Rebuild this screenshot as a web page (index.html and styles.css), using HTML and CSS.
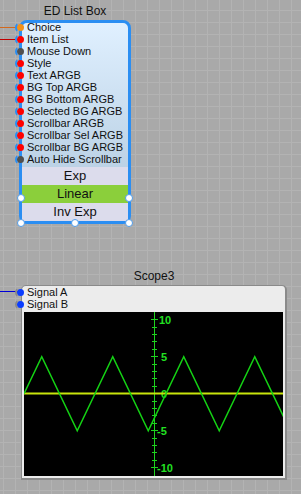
FILE: index.html
```html
<!DOCTYPE html>
<html lang="en">
<head>
    <meta charset="UTF-8">
    <meta name="viewport" content="width=device-width, initial-scale=1.0">
    <title>Schematic</title>
    <link rel="stylesheet" href="styles.css">
</head>
<body>
    <div class="wire wire-orange" style="top:27px"></div>
    <div class="wire wire-red" style="top:39px"></div>
    <div class="wire wire-blue" style="top:291px"></div>

    <div class="node" id="listbox-node">
        <div class="node-title">ED List Box</div>
        <div class="node-body listbox-body">
            <div class="ports">
                <div class="port"><span class="pin orange"></span>Choice</div>
                <div class="port"><span class="pin red"></span>Item List</div>
                <div class="port"><span class="pin grey"></span>Mouse Down</div>
                <div class="port"><span class="pin red"></span>Style</div>
                <div class="port"><span class="pin red"></span>Text ARGB</div>
                <div class="port"><span class="pin red"></span>BG Top ARGB</div>
                <div class="port"><span class="pin red"></span>BG Bottom ARGB</div>
                <div class="port"><span class="pin red"></span>Selected BG ARGB</div>
                <div class="port"><span class="pin red"></span>Scrollbar ARGB</div>
                <div class="port"><span class="pin red"></span>Scrollbar Sel ARGB</div>
                <div class="port"><span class="pin red"></span>Scrollbar BG ARGB</div>
                <div class="port"><span class="pin grey"></span>Auto Hide Scrollbar</div>
            </div>
            <ul class="items">
                <li>Exp</li>
                <li class="selected">Linear</li>
                <li>Inv Exp</li>
            </ul>
            <span class="handle" style="left:-1px;top:171px"></span>
            <span class="handle" style="right:-1px;top:171px"></span>
            <span class="handle" style="left:-1px;bottom:-6px"></span>
            <span class="handle" style="left:53px;bottom:-6px"></span>
            <span class="handle" style="right:-1px;bottom:-6px"></span>
        </div>
    </div>

    <div class="node" id="scope-node">
        <div class="node-title">Scope3</div>
        <div class="node-body scope-body">
            <div class="ports">
                <div class="port"><span class="pin blue"></span>Signal A</div>
                <div class="port"><span class="pin blue"></span>Signal B</div>
            </div>
            <svg class="plot" width="259" height="164" viewBox="0 0 259 164">
                <g stroke="#1ed21e" stroke-width="1">
                    <line x1="130.5" y1="0" x2="130.5" y2="164"/>
                    <line x1="127" y1="7.5" x2="134" y2="7.5"/>
                    <line x1="128" y1="15.5" x2="133" y2="15.5"/>
                    <line x1="128" y1="22.5" x2="133" y2="22.5"/>
                    <line x1="128" y1="29.5" x2="133" y2="29.5"/>
                    <line x1="128" y1="37.5" x2="133" y2="37.5"/>
                    <line x1="127" y1="44.5" x2="134" y2="44.5"/>
                    <line x1="128" y1="52.5" x2="133" y2="52.5"/>
                    <line x1="128" y1="59.5" x2="133" y2="59.5"/>
                    <line x1="128" y1="66.5" x2="133" y2="66.5"/>
                    <line x1="128" y1="74.5" x2="133" y2="74.5"/>
                    <line x1="127" y1="81.5" x2="134" y2="81.5"/>
                    <line x1="128" y1="89.5" x2="133" y2="89.5"/>
                    <line x1="128" y1="96.5" x2="133" y2="96.5"/>
                    <line x1="128" y1="103.5" x2="133" y2="103.5"/>
                    <line x1="128" y1="111.5" x2="133" y2="111.5"/>
                    <line x1="127" y1="118.5" x2="134" y2="118.5"/>
                    <line x1="128" y1="126.5" x2="133" y2="126.5"/>
                    <line x1="128" y1="133.5" x2="133" y2="133.5"/>
                    <line x1="128" y1="140.5" x2="133" y2="140.5"/>
                    <line x1="128" y1="148.5" x2="133" y2="148.5"/>
                    <line x1="127" y1="155.5" x2="134" y2="155.5"/>
                </g>
                <g class="axis-label">
                    <text x="135" y="11.8">10</text>
                    <text x="137" y="48.8">5</text>
                    <text x="137" y="85.8">0</text>
                    <text x="133" y="122.8">-5</text>
                    <text x="133" y="159.8">-10</text>
                </g>
                <line x1="0" y1="81.5" x2="259" y2="81.5" stroke="#c8e40c" stroke-width="2"/>
                <polyline fill="none" stroke="#14d214" stroke-width="1.5"
                    points="0,81.7 17.75,44.7 53.25,118.7 88.75,44.7 124.25,118.7 159.75,44.7 195.25,118.7 230.75,44.7 266.25,118.7"/>
            </svg>
        </div>
    </div>
</body>
</html>
```

FILE: styles.css
```css
*{
    margin: 0;
    padding: 0;
    box-sizing: border-box;
}
body{
    width: 301px;
    height: 494px;
    position: relative;
    overflow: hidden;
    font-family: "Liberation Sans", Arial, sans-serif;
    color: #111;
    background-color: #a9a9a9;
    background-image:
        linear-gradient(90deg, #b3b3b3 1px, transparent 1px),
        linear-gradient(#b3b3b3 1px, transparent 1px);
    background-size: 12px 12px;
    background-position: 3px 10px;
}
ul{
    list-style: none;
}
.wire{
    position: absolute;
    left: 0;
    width: 18px;
    height: 1px;
}
.wire-orange{
    background: #d2691e;
}
.wire-red{
    background: #c00000;
}
.wire-blue{
    background: #0000d8;
}
.node{
    position: absolute;
}
.node-title{
    font-size: 12px;
    line-height: 14px;
    height: 14px;
    margin-bottom: 2px;
    text-align: center;
    white-space: nowrap;
}
#listbox-node{
    left: 19px;
    top: 4px;
    width: 112px;
}
#scope-node{
    left: 21px;
    top: 269px;
    width: 266px;
}
.node-body{
    position: relative;
}
.listbox-body{
    border: 3px solid #2b8ef2;
    border-radius: 8px;
    background: linear-gradient(#e0f0ff, #b8cfe3 80%);
}
.ports{
    margin-top: -2px;
}
.port{
    display: flex;
    align-items: center;
    height: 12px;
    font-size: 11px;
    line-height: 12px;
    white-space: nowrap;
}
.pin{
    flex: none;
    width: 11px;
    height: 11px;
    margin-left: -7px;
    margin-right: 1px;
    border: 2px solid transparent;
    border-left-color: #2b8ef2;
    border-radius: 50%;
    background-clip: content-box;
}
.pin.orange{
    background-color: #f3911a;
}
.pin.red{
    background-color: #ff0000;
}
.pin.grey{
    background-color: #505050;
}
.pin.blue{
    background-color: #0a3cff;
    border-left-color: #8a8a8a;
}
.items{
    margin-top: 2px;
    background: #dcdcec;
}
.items li{
    height: 18px;
    line-height: 18px;
    font-size: 13px;
    text-align: center;
}
.items li.selected{
    background: #8bcf3b;
}
.handle{
    position: absolute;
    width: 8px;
    height: 8px;
    margin-left: -4px;
    border: 1px solid #4f9be8;
    border-radius: 50%;
    background: #fff;
}
.handle[style*="right"]{
    margin-left: 0;
    margin-right: -4px;
}
.scope-body{
    border: 1px solid #8a8a8a;
    border-right-width: 2px;
    border-bottom-width: 2px;
    border-radius: 5px 5px 0 0;
    background: #ececec;
}
.scope-body .ports{
    margin-top: 0;
}
.plot{
    display: block;
    margin: 2px;
    background: #000;
}
.axis-label text{
    fill: #22e022;
    font-family: "Liberation Sans", Arial, sans-serif;
    font-size: 11px;
    font-weight: bold;
}
```
